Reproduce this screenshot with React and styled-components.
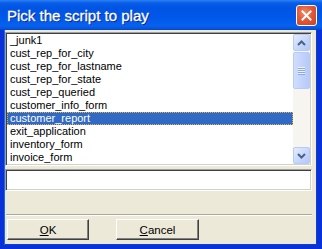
import React from "react";
import styled, { createGlobalStyle } from "styled-components";

const Global = createGlobalStyle`
  html, body { margin: 0; padding: 0; background: #ECE9D8; }
  body { font-family: "Liberation Sans", Arial, sans-serif; }
`;

const Window = styled.div`
  width: 322px;
  height: 249px;
  display: flex;
  flex-direction: column;
  box-sizing: border-box;
  overflow: hidden;
`;

const TitleBar = styled.div`
  height: 30px;
  flex: none;
  display: flex;
  align-items: center;
  justify-content: space-between;
  padding: 0 5px 0 7px;
  box-sizing: border-box;
  background: linear-gradient(
    to bottom,
    #2a83f6 0px,
    #0a5de8 3px,
    #0054e3 8px,
    #0058e8 18px,
    #0861ee 26px,
    #0452dc 29px,
    #0342c8 30px
  );
`;

const Title = styled.span`
  color: #ffffff;
  font-size: 15px;
  font-weight: normal;
  -webkit-text-stroke: 0.3px #ffffff;
  text-shadow: 1px 1px 0 #0a1e8a;
  padding-top: 1px;
`;

const CloseButton = styled.div`
  width: 21px;
  height: 21px;
  box-sizing: border-box;
  border: 1px solid #ffffff;
  border-radius: 3px;
  background: radial-gradient(circle at 40% 35%, #ef8b6b 0%, #e25a36 45%, #c9401f 100%);
  display: flex;
  align-items: center;
  justify-content: center;
  margin-top: 1px;
`;

const Body = styled.div`
  flex: 1;
  display: flex;
  flex-direction: column;
  background: #ece9d8;
  border-left: 4px solid #0831d9;
  border-right: 5px solid #0831d9;
  border-bottom: 4px solid #0831d9;
  box-shadow: inset 1px 0 0 #166aee, inset -1px 0 0 #0a3fd0, inset 0 -1px 0 #0a3fd0;
  padding: 2px 5px 0 1px;
  box-sizing: border-box;
`;

const ListBox = styled.div`
  height: 134px;
  box-sizing: border-box;
  display: flex;
  background: #ffffff;
  border: 1px solid;
  border-color: #a0a0a0 #ffffff #ffffff #a0a0a0;
  box-shadow: inset 1px 1px 0 #404040, inset -1px -1px 0 #d4d0c8;
  padding: 1px;
`;

const List = styled.ul`
  list-style: none;
  margin: 0;
  padding: 0;
  flex: 1;
  overflow: hidden;
`;

const Item = styled.li`
  height: 13px;
  line-height: 13px;
  font-size: 11px;
  padding-left: 3px;
  box-sizing: border-box;
  white-space: nowrap;
  color: ${(p) => (p.$selected ? "#ffffff" : "#000000")};
  background: ${(p) => (p.$selected ? "#316ac5" : "transparent")};
  outline: ${(p) => (p.$selected ? "1px dotted #e8b040" : "none")};
  outline-offset: -1px;
`;

const ScrollBar = styled.div`
  width: 17px;
  flex: none;
  display: flex;
  flex-direction: column;
  background: #f6f5f0;
`;

const ScrollButton = styled.div`
  width: 17px;
  height: 17px;
  flex: none;
  box-sizing: border-box;
  border: 1px solid #b6cbf6;
  border-radius: 2px;
  background: linear-gradient(135deg, #e4ecfd 0%, #c4d5fc 60%, #b4c8f6 100%);
  display: flex;
  align-items: center;
  justify-content: center;
`;

const Thumb = styled(ScrollButton)`
  height: 37px;
  margin-top: 1px;
  background: linear-gradient(to right, #d0defc 0%, #c2d3fc 50%, #b7cbf8 100%);
  flex-direction: column;
  gap: 1px;
`;

const Grip = styled.span`
  display: block;
  width: 7px;
  height: 1px;
  background: #eef3fe;
  box-shadow: 0 1px 0 #8ca6e4;
`;

const Track = styled.div`
  flex: 1;
`;

const TextInput = styled.input`
  margin-top: 3px;
  height: 22px;
  box-sizing: border-box;
  border: 1px solid;
  border-color: #a0a0a0 #ffffff #ffffff #a0a0a0;
  box-shadow: inset 1px 1px 0 #404040, inset -1px -1px 0 #d4d0c8;
  background: #ffffff;
  padding: 0 3px;
  font-size: 11px;
  font-family: "Liberation Sans", Arial, sans-serif;
  outline: none;
`;

const Separator = styled.div`
  margin: 23px 0 0 1px;
  height: 2px;
  border-top: 1px solid #aca899;
  border-bottom: 1px solid #ffffff;
  box-sizing: border-box;
`;

const ButtonRow = styled.div`
  display: flex;
  gap: 27px;
  margin-top: 3px;
  padding-left: 2px;
`;

const Button = styled.button`
  width: ${(p) => p.$w}px;
  height: 21px;
  box-sizing: border-box;
  background: #ece9d8;
  border: 1px solid;
  border-color: #ffffff #404040 #404040 #ffffff;
  box-shadow: inset -1px -1px 0 #808080;
  font-family: "Liberation Sans", Arial, sans-serif;
  font-size: 11.5px;
  color: #000000;
  padding: 0;
  display: flex;
  align-items: center;
  justify-content: center;
  u { text-decoration: underline; text-underline-offset: 1px; }
`;

const items = [
  "_junk1",
  "cust_rep_for_city",
  "cust_rep_for_lastname",
  "cust_rep_for_state",
  "cust_rep_queried",
  "customer_info_form",
  "customer_report",
  "exit_application",
  "inventory_form",
  "invoice_form",
];

const Chevron = ({ up }) => (
  <svg width="9" height="6" viewBox="0 0 9 6">
    <path
      d={up ? "M1 5 L4.5 1.5 L8 5" : "M1 1 L4.5 4.5 L8 1"}
      fill="none"
      stroke="#4d6185"
      strokeWidth="2"
    />
  </svg>
);

export default function App() {
  return (
    <>
      <Global />
      <Window>
        <TitleBar>
          <Title>Pick the script to play</Title>
          <CloseButton>
            <svg width="11" height="11" viewBox="0 0 11 11">
              <path d="M1.5 1.5 L9.5 9.5 M9.5 1.5 L1.5 9.5" stroke="#fff" strokeWidth="2" strokeLinecap="square" />
            </svg>
          </CloseButton>
        </TitleBar>
        <Body>
          <ListBox>
            <List>
              {items.map((it) => (
                <Item key={it} $selected={it === "customer_report"}>
                  {it}
                </Item>
              ))}
            </List>
            <ScrollBar>
              <ScrollButton>
                <Chevron up />
              </ScrollButton>
              <Thumb>
                <Grip />
                <Grip />
                <Grip />
                <Grip />
              </Thumb>
              <Track />
              <ScrollButton>
                <Chevron />
              </ScrollButton>
            </ScrollBar>
          </ListBox>
          <TextInput defaultValue="" />
          <Separator />
          <ButtonRow>
            <Button $w={82}>
              <u>O</u>K
            </Button>
            <Button $w={83}>
              <u>C</u>ancel
            </Button>
          </ButtonRow>
        </Body>
      </Window>
    </>
  );
}
